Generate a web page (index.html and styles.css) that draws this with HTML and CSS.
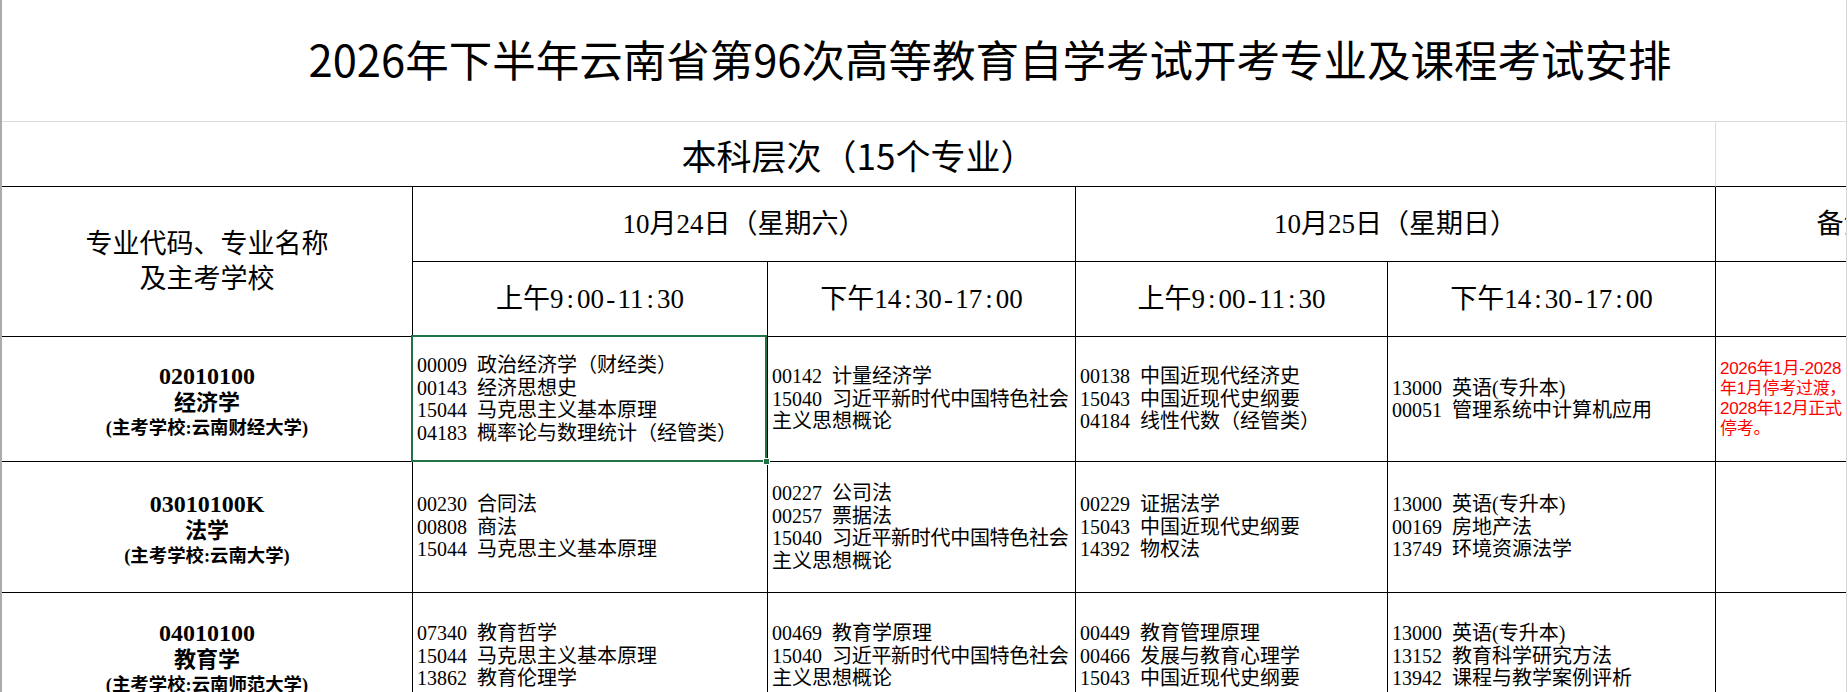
FILE: index.html
```html
<!DOCTYPE html>
<html lang="zh-CN">
<head>
<meta charset="utf-8">
<title>2026年下半年云南省第96次高等教育自学考试开考专业及课程考试安排</title>
<link rel="stylesheet" href="styles.css">
</head>
<body>
<div class="viewport">
  <div class="sheet">
    <div class="c title">2026年下半年云南省第96次高等教育自学考试开考专业及课程考试安排</div>
    <div class="c sub">本科层次（15个专业）</div>
    <div class="c sub-r"></div>

    <div class="c hd major-hd"><div>专业代码、专业名称<br>及主考学校</div></div>
    <div class="c hd day">10月24日（星期六）</div>
    <div class="c hd day">10月25日（星期日）</div>
    <div class="c hd remark">备注</div>
    <div class="c hd">上午9<span class="p">:</span>00<span class="p">-</span>11<span class="p">:</span>30</div>
    <div class="c hd">下午14<span class="p">:</span>30<span class="p">-</span>17<span class="p">:</span>00</div>
    <div class="c hd">上午9<span class="p">:</span>00<span class="p">-</span>11<span class="p">:</span>30</div>
    <div class="c hd">下午14<span class="p">:</span>30<span class="p">-</span>17<span class="p">:</span>00</div>
    <div class="c"></div>

    <!-- row 1 -->
    <div class="c m">
      <div class="code">02010100</div>
      <div class="name">经济学</div>
      <div class="school">(主考学校:云南财经大学)</div>
    </div>
    <div class="c d sel"><div>
      <span class="cd">00009</span> 政治经济学（财经类）<br>
      <span class="cd">00143</span> 经济思想史<br>
      <span class="cd">15044</span> 马克思主义基本原理<br>
      <span class="cd">04183</span> 概率论与数理统计（经管类）
    </div></div>
    <div class="c d"><div>
      <span class="cd">00142</span> 计量经济学<br>
      <span class="cd">15040</span> <span class="sq">习近平新时代中国特色社会</span><br>
      主义思想概论
    </div></div>
    <div class="c d"><div>
      <span class="cd">00138</span> 中国近现代经济史<br>
      <span class="cd">15043</span> 中国近现代史纲要<br>
      <span class="cd">04184</span> 线性代数（经管类）
    </div></div>
    <div class="c d"><div>
      <span class="cd">13000</span> 英语(专升本)<br>
      <span class="cd">00051</span> 管理系统中计算机应用
    </div></div>
    <div class="c d note"><div>2026年1月-2028<br>年1月停考过渡，<br>2028年12月正式<br>停考。</div></div>

    <!-- row 2 -->
    <div class="c m">
      <div class="code">03010100K</div>
      <div class="name">法学</div>
      <div class="school">(主考学校:云南大学)</div>
    </div>
    <div class="c d"><div>
      <span class="cd">00230</span> 合同法<br>
      <span class="cd">00808</span> 商法<br>
      <span class="cd">15044</span> 马克思主义基本原理
    </div></div>
    <div class="c d"><div>
      <span class="cd">00227</span> 公司法<br>
      <span class="cd">00257</span> 票据法<br>
      <span class="cd">15040</span> <span class="sq">习近平新时代中国特色社会</span><br>
      主义思想概论
    </div></div>
    <div class="c d"><div>
      <span class="cd">00229</span> 证据法学<br>
      <span class="cd">15043</span> 中国近现代史纲要<br>
      <span class="cd">14392</span> 物权法
    </div></div>
    <div class="c d"><div>
      <span class="cd">13000</span> 英语(专升本)<br>
      <span class="cd">00169</span> 房地产法<br>
      <span class="cd">13749</span> 环境资源法学
    </div></div>
    <div class="c"></div>

    <!-- row 3 -->
    <div class="c m">
      <div class="code">04010100</div>
      <div class="name">教育学</div>
      <div class="school">(主考学校:云南师范大学)</div>
    </div>
    <div class="c d"><div>
      <span class="cd">07340</span> 教育哲学<br>
      <span class="cd">15044</span> 马克思主义基本原理<br>
      <span class="cd">13862</span> 教育伦理学
    </div></div>
    <div class="c d"><div>
      <span class="cd">00469</span> 教育学原理<br>
      <span class="cd">15040</span> <span class="sq">习近平新时代中国特色社会</span><br>
      主义思想概论
    </div></div>
    <div class="c d"><div>
      <span class="cd">00449</span> 教育管理原理<br>
      <span class="cd">00466</span> 发展与教育心理学<br>
      <span class="cd">15043</span> 中国近现代史纲要
    </div></div>
    <div class="c d"><div>
      <span class="cd">13000</span> 英语(专升本)<br>
      <span class="cd">13152</span> 教育科学研究方法<br>
      <span class="cd">13942</span> 课程与教学案例评析
    </div></div>
    <div class="c"></div>
  </div>
</div>
</body>
</html>
```

FILE: styles.css
```css
html, body {
  margin: 0;
  padding: 0;
  background: #ffffff;
}

.viewport {
  width: 1847px;
  height: 692px;
  overflow: hidden;
  box-sizing: border-box;
  border-left: 2px solid #ababab;
  border-right: 1px solid #d6d6d6;
}

.sheet {
  display: grid;
  grid-template-columns: 411px 355px 308px 312px 328px 262px;
  grid-template-rows: 122px 65px 75px 75px 125px 131px 127px;
  width: 1976px;
  color: #000;
  font-family: "Liberation Serif", "Noto Sans CJK SC", serif;
}

.c {
  box-sizing: border-box;
  border-right: 1px solid #000;
  border-bottom: 1px solid #000;
  display: flex;
  align-items: center;
  justify-content: center;
  min-width: 0;
}

.title {
  grid-column: 1 / -1;
  border-right: none;
  border-bottom-color: #dcdcdc;
  padding-bottom: 4px;
  font-family: "Noto Sans CJK SC", sans-serif;
  font-size: 43.5px;
  line-height: 1;
  white-space: nowrap;
}

.sub {
  grid-column: 1 / 6;
  border-right-color: #dcdcdc;
  font-family: "Noto Sans CJK SC", sans-serif;
  font-size: 35px;
  line-height: 1;
  white-space: nowrap;
}

.sub-r {
  border-right: none;
}

.hd {
  font-size: 27px;
  line-height: 34.5px;
  text-align: center;
  white-space: nowrap;
}

.hd .p {
  display: inline-block;
  width: 0.5em;
  text-align: center;
}

.remark {
  padding-right: 6px;
}

.major-hd {
  grid-row: span 2;
}

.day {
  grid-column: span 2;
}

/* major name cells */
.m {
  flex-direction: column;
  text-align: center;
  font-weight: 700;
  white-space: nowrap;
  padding-top: 6px;
}

.code {
  font-size: 24px;
  line-height: 24.5px;
}

.name {
  font-size: 22px;
  line-height: 24.5px;
  margin-top: 3px;
}

.school {
  font-size: 18.4px;
  line-height: 24.5px;
}

/* course cells */
.d {
  justify-content: flex-start;
  padding-left: 4px;
  font-size: 20px;
  line-height: 22.5px;
  text-align: left;
  white-space: nowrap;
}

.cd {
  margin-right: 5px;
}

.sq {
  letter-spacing: -0.3px;
}

.note {
  color: #ff0000;
  font-family: "Liberation Sans", "Noto Sans CJK SC", sans-serif;
  font-size: 17px;
  line-height: 20.2px;
  letter-spacing: -0.3px;
}

/* Excel-like selected cell */
.sel {
  position: relative;
}

.sel::before {
  content: "";
  position: absolute;
  top: -2px;
  left: -2px;
  right: 0;
  bottom: -1px;
  border: 2px solid #217346;
  pointer-events: none;
}

.sel::after {
  content: "";
  position: absolute;
  right: -3px;
  bottom: -4px;
  width: 5px;
  height: 5px;
  background: #217346;
  border: 1px solid #ffffff;
}
```
